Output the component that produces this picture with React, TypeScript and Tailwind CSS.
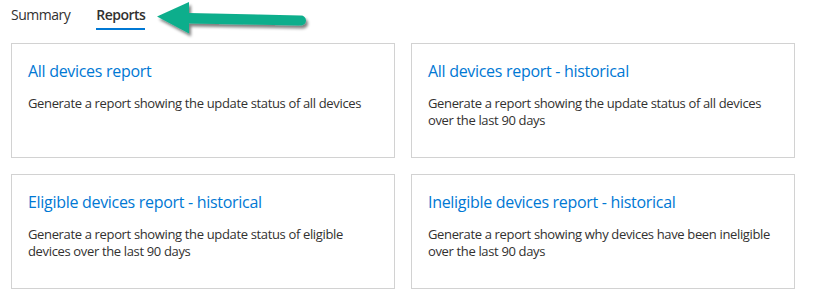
import React from 'react';

const reports = [
  {
    title: 'All devices report',
    body: 'Generate a report showing the update status of all devices',
  },
  {
    title: 'All devices report - historical',
    body: 'Generate a report showing the update status of all devices over the last 90 days',
  },
  {
    title: 'Eligible devices report - historical',
    body: 'Generate a report showing the update status of eligible devices over the last 90 days',
  },
  {
    title: 'Ineligible devices report - historical',
    body: 'Generate a report showing why devices have been ineligible over the last 90 days',
  },
];

function Arrow() {
  return (
    <svg
      className="absolute left-[150px] top-0"
      width="170"
      height="42"
      viewBox="150 0 170 42"
    >
      <defs>
        <filter id="sh" x="-20%" y="-50%" width="140%" height="200%">
          <feGaussianBlur in="SourceAlpha" stdDeviation="1.6" />
          <feOffset dx="2" dy="3" result="b" />
          <feComponentTransfer>
            <feFuncA type="linear" slope="0.5" />
          </feComponentTransfer>
          <feMerge>
            <feMergeNode />
            <feMergeNode in="SourceGraphic" />
          </feMerge>
        </filter>
      </defs>
      <path
        d="M157 16.5 L189 2 L189 13 L301 15.5 A5 5 0 0 1 301 25.5 L189 23.5 L189 33.5 Z"
        fill="#0fae8c"
        filter="url(#sh)"
      />
    </svg>
  );
}

export default function App() {
  return (
    <div className="relative h-[306px] w-[815px] bg-white font-['Segoe_UI','Open_Sans',sans-serif] text-[#323130]">
      <Arrow />
      <div className="flex gap-[26px] pl-[11px] pt-[5px]">
        <div className="pb-[5px] text-[14px] leading-[20px] tracking-[-0.5px]">Summary</div>
        <div className="border-b-2 border-[#0078d4] pb-[3px] text-[14px] font-semibold leading-[20px] tracking-[-0.5px]">
          Reports
        </div>
      </div>
      <div className="grid w-[795px] grid-cols-2 gap-x-[16px] gap-y-[16px] pl-[11px] pt-[13px]">
        {reports.map((r) => (
          <div
            key={r.title}
            className="h-[115px] border border-[#d2d2d2] px-[16px] pt-[16px]"
          >
            <div className="text-[16px] leading-[22px] tracking-[-0.3px] text-[#0078d4]">
              {r.title}
            </div>
            <p className="mt-[13px] pr-[4px] text-[13px] leading-[17px] tracking-[-0.35px]">
              {r.body}
            </p>
          </div>
        ))}
      </div>
    </div>
  );
}
